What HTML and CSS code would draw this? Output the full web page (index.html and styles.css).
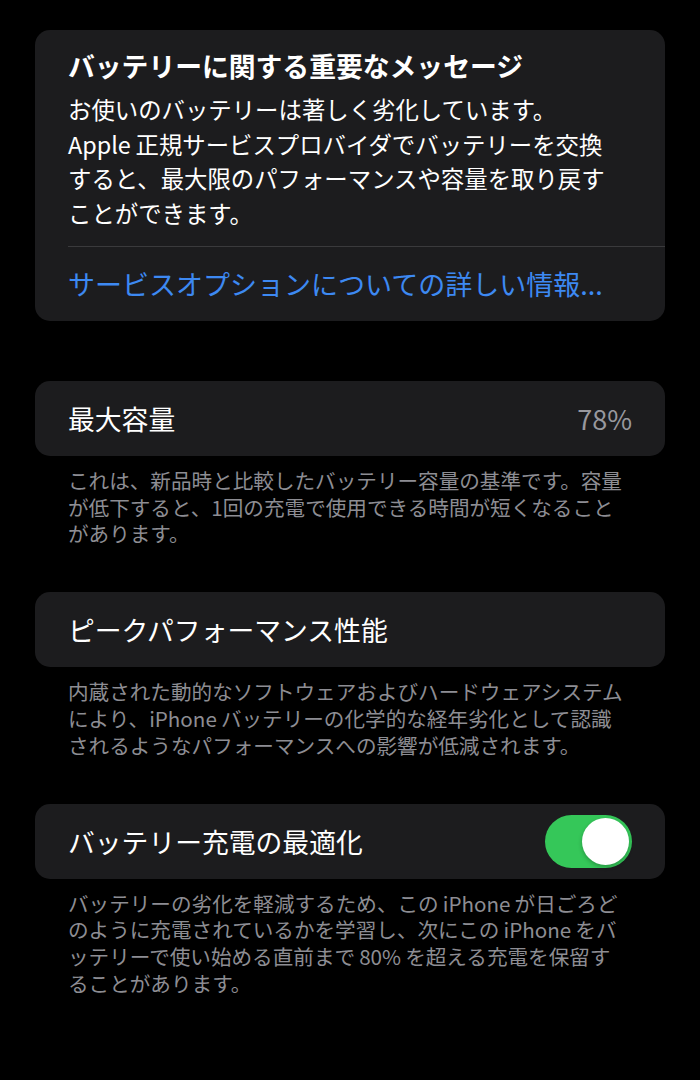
FILE: index.html
```html
<!DOCTYPE html>
<html lang="ja">
<head>
<meta charset="utf-8">
<link rel="stylesheet" href="styles.css">
</head>
<body>
<div class="page">
  <section class="card message">
    <div class="msg-body">
      <h1 class="msg-title">バッテリーに関する重要なメッセージ</h1>
      <p class="msg-text">お使いのバッテリーは著しく劣化しています。<br><span class="lat nl">Apple</span>正規サービスプロバイダでバッテリーを交換<br>すると、最大限のパフォーマンスや容量を取り戻す<br>ことができます。</p>
    </div>
    <div class="msg-link-row">
      <span class="msg-link">サービスオプションについての詳しい情報...</span>
    </div>
  </section>

  <section class="card row">
    <span class="row-label">最大容量</span>
    <span class="row-value">78%</span>
  </section>
  <p class="footer">これは、新品時と比較したバッテリー容量の基準です。容量<br>が低下すると、1回の充電で使用できる時間が短くなること<br>があります。</p>

  <section class="card row">
    <span class="row-label">ピークパフォーマンス性能</span>
  </section>
  <p class="footer">内蔵された動的なソフトウェアおよびハードウェアシステム<br>により、<span class="lat nl">iPhone</span>バッテリーの化学的な経年劣化として認識<br>されるようなパフォーマンスへの影響が低減されます。</p>

  <section class="card row">
    <span class="row-label">バッテリー充電の最適化</span>
    <span class="toggle"><span class="knob"></span></span>
  </section>
  <p class="footer">バッテリーの劣化を軽減するため、この<span class="lat">iPhone</span>が日ごろど<br>のように充電されているかを学習し、次にこの<span class="lat">iPhone</span>をバ<br>ッテリーで使い始める直前まで<span class="lat">80%</span>を超える充電を保留す<br>ることがあります。</p>
</div>
</body>
</html>
```

FILE: styles.css
```css
html, body {
  margin: 0;
  padding: 0;
  background: #000;
}
body {
  font-family: "Noto Sans CJK JP", "Noto Sans", sans-serif;
  color: #fff;
  width: 700px;
  height: 1080px;
  overflow: hidden;
}
.page {
  padding: 30px 35px 0 35px;
  display: flex;
  flex-direction: column;
}
.card {
  background: #1c1c1e;
  border-radius: 15px;
}
.message {
  padding-left: 33px;
  margin-bottom: 60px;
}
.msg-body {
  padding: 19px 33px 15px 0;
}
.msg-title {
  margin: 0;
  font-size: 26.8px;
  font-weight: 700;
  line-height: 34px;
  white-space: nowrap;
}
.msg-text {
  margin: 9px 0 0 0;
  font-size: 23.4px;
  line-height: 34.7px;
  white-space: nowrap;
}
.lat {
  padding: 0 0.2em;
}
.lat.nl {
  padding-left: 0;
}
.msg-link-row {
  border-top: 1px solid #3a3a3c;
  height: 74px;
  display: flex;
  align-items: center;
}
.msg-link {
  color: #3d89f2;
  font-size: 27px;
  white-space: nowrap;
}
.row {
  height: 75px;
  padding: 0 33px;
  display: flex;
  align-items: center;
  justify-content: space-between;
}
.row-label {
  font-size: 26.8px;
  white-space: nowrap;
}
.row-value {
  font-size: 27px;
  color: #98989e;
}
.footer {
  margin: 11px 0 45px 0;
  padding-left: 33px;
  font-size: 20.6px;
  line-height: 26.8px;
  color: #8d8d93;
  white-space: nowrap;
}
.toggle {
  width: 87px;
  height: 53px;
  border-radius: 27px;
  background: #35c759;
  display: flex;
  align-items: center;
  justify-content: flex-end;
  padding-right: 3px;
  box-sizing: border-box;
}
.knob {
  width: 47px;
  height: 47px;
  border-radius: 50%;
  background: #fff;
  box-shadow: 0 2px 4px rgba(0,0,0,0.25);
}
```
